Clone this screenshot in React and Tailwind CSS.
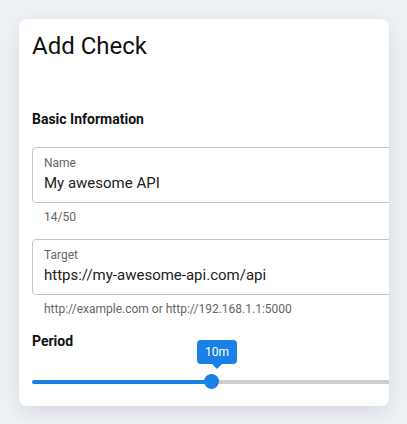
import React from "react";

const font = { fontFamily: "Roboto, 'Liberation Sans', sans-serif" };

const Field = ({ label, value, helper }) => (
  <div>
    <div className="w-[400px] h-[56px] border border-[#c4c4c4] rounded-[4px] pl-[11px] pt-[7px]">
      <div className="text-[12px] leading-4 text-[#666]">{label}</div>
      <div className="text-[15px] leading-6 text-[#212121]">{value}</div>
    </div>
    <div className="mt-[6px] pl-[12px] text-[12px] leading-4 text-[#666]">{helper}</div>
  </div>
);

export default function App() {
  return (
    <div className="min-h-[424px] bg-[#edf0f4] p-[19px]" style={font}>
      <div className="w-[370px] h-[387px] bg-white rounded-lg overflow-hidden shadow-[0_6px_18px_rgba(0,0,0,0.09)] pl-[13px] pt-[11px]">
        <h1 className="text-[24px] leading-8 text-[#111] font-normal">Add Check</h1>
        <h2 className="mt-[47px] text-[14px] leading-5 font-bold text-[#111]">Basic Information</h2>
        <div className="mt-[18px] flex flex-col gap-[14px] w-[400px]">
          <Field label="Name" value="My awesome API" helper="14/50" />
          <Field label="Target" value="https://my-awesome-api.com/api" helper="http://example.com or http://192.168.1.1:5000" />
        </div>
        <div className="mt-[14px] text-[14px] leading-5 font-bold text-[#111]">Period</div>
        <div className="mt-[21px] h-[20px] w-[400px] flex items-center relative">
          <div className="h-[4px] w-[179px] bg-[#1a80e5] rounded-l-full"></div>
          <div className="h-[4px] flex-1 bg-[#cccccc]"></div>
          <div className="absolute left-[172px] top-[2px] w-[15px] h-[15px] rounded-full bg-[#1a80e5]"></div>
          <div className="absolute left-[165px] top-[-32px] flex flex-col items-center">
            <div className="w-[40px] h-[24px] rounded-[4px] bg-[#1a80e5] text-white text-[12px] leading-6 text-center">10m</div>
            <div className="w-0 h-0 border-l-[5px] border-r-[5px] border-t-[5px] border-l-transparent border-r-transparent border-t-[#1a80e5]"></div>
          </div>
        </div>
      </div>
    </div>
  );
}
